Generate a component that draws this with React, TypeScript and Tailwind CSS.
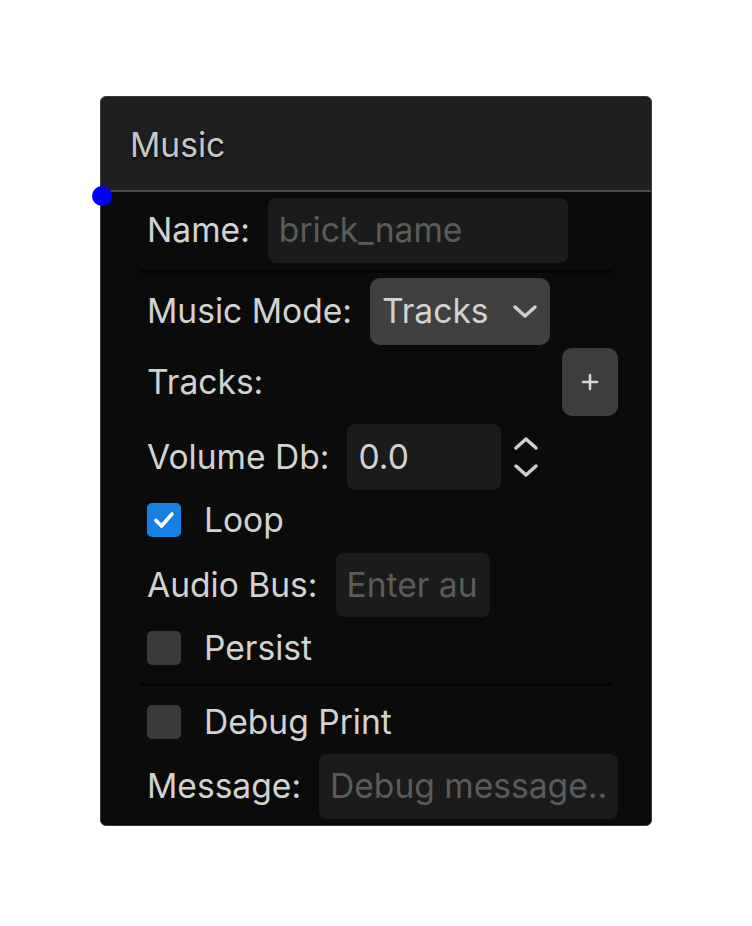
const Chevron = ({ up = false }: { up?: boolean }) => (
  <svg width="26" height="16" viewBox="0 0 26 16" fill="none">
    <path
      d={up ? 'M3 13 L13 4 L23 13' : 'M3 3 L13 12 L23 3'}
      stroke="#cfcfcf"
      strokeWidth="3.5"
      strokeLinecap="round"
      strokeLinejoin="round"
    />
  </svg>
);

const Checkbox = ({ checked }: { checked?: boolean }) =>
  checked ? (
    <div className="flex h-[34px] w-[34px] items-center justify-center rounded-[5px] bg-[#1780e0]">
      <svg width="24" height="24" viewBox="0 0 24 24" fill="none">
        <path d="M4 12.5 L9.5 18 L20 6" stroke="#fff" strokeWidth="3.6" strokeLinecap="round" strokeLinejoin="round" />
      </svg>
    </div>
  ) : (
    <div className="h-[34px] w-[34px] rounded-[5px] bg-[#3a3a3a]" />
  );

const Divider = ({ className }: { className: string }) => (
  <div className={`-ml-[7px] mr-[6px] h-[3px] bg-[#050505] ${className}`} />
);

const App = () => {
  return (
    <div className="min-h-[926px] bg-white pl-[100px] pt-[96px] font-['Inter',sans-serif] text-[33.6px] text-[#d2d2d2]">
      <div className="relative w-[552px] rounded-[6px] border border-[#3c3c3c] bg-[#0b0b0b]">
        <div className="flex h-[95px] items-center rounded-t-[5px] border-b-2 border-[#4a4a4a] bg-[#1f1f1f] px-[29px] pt-[3px] text-[#c6c6c6] [text-shadow:0_2px_3px_rgba(0,0,0,0.9)]">
          Music
        </div>

        <div className="absolute left-[-9px] top-[89px] h-[20px] w-[20px] rounded-full bg-[#0000ff]" />

        <div className="rounded-b-[5px] bg-[#0b0b0b] pb-[6px] pl-[46px] pr-[33px] pt-[6px]">
          <div className="flex h-[65px] items-center gap-[18px]">
            <span>Name:</span>
            <div className="flex h-[65px] w-[300px] items-center rounded-[8px] bg-[#1b1b1b] pl-[11px] text-[#5b5b5b]">
              brick_name
            </div>
          </div>

          <Divider className="mt-[7px]" />

          <div className="mt-[5px] flex h-[67px] items-center gap-[18px]">
            <span>Music Mode:</span>
            <div className="flex h-[67px] w-[180px] items-center justify-between rounded-[10px] bg-[#404040] pl-[12px] pr-[12px]">
              <span>Tracks</span>
              <Chevron />
            </div>
          </div>

          <div className="mt-[3px] flex h-[68px] items-center justify-between">
            <span>Tracks:</span>
            <div className="flex h-[68px] w-[56px] items-center justify-center rounded-[10px] bg-[#3d3d3d]">
              <svg width="18" height="18" viewBox="0 0 18 18" fill="none">
                <path d="M9 2 V16 M2 9 H16" stroke="#d6d6d6" strokeWidth="2.6" strokeLinecap="round" />
              </svg>
            </div>
          </div>

          <div className="mt-[8px] flex h-[66px] items-center gap-[18px]">
            <span>Volume Db:</span>
            <div className="flex h-[66px] w-[154px] items-center rounded-[8px] bg-[#1b1b1b] pl-[11px]">0.0</div>
            <div className="-ml-[6px] flex flex-col gap-[12px]">
              <Chevron up />
              <Chevron />
            </div>
          </div>

          <div className="mt-[13px] flex h-[34px] items-center gap-[23px]">
            <Checkbox checked />
            <span>Loop</span>
          </div>

          <div className="mt-[16px] flex h-[64px] items-center gap-[18px]">
            <span>Audio Bus:</span>
            <div className="flex h-[64px] w-[154px] items-center overflow-hidden whitespace-nowrap rounded-[8px] bg-[#1b1b1b] pl-[11px] text-[#5b5b5b]">
              Enter au
            </div>
          </div>

          <div className="mt-[14px] flex h-[34px] items-center gap-[23px]">
            <Checkbox />
            <span>Persist</span>
          </div>

          <Divider className="mt-[18px]" />

          <div className="mt-[19px] flex h-[34px] items-center gap-[23px]">
            <Checkbox />
            <span>Debug Print</span>
          </div>

          <div className="mt-[15px] flex h-[65px] items-center gap-[18px]">
            <span>Message:</span>
            <div className="flex h-[65px] w-[300px] items-center rounded-[8px] bg-[#1b1b1b] pl-[11px] text-[#5b5b5b]">
              Debug message..
            </div>
          </div>
        </div>
      </div>
    </div>
  );
};

export default App;
